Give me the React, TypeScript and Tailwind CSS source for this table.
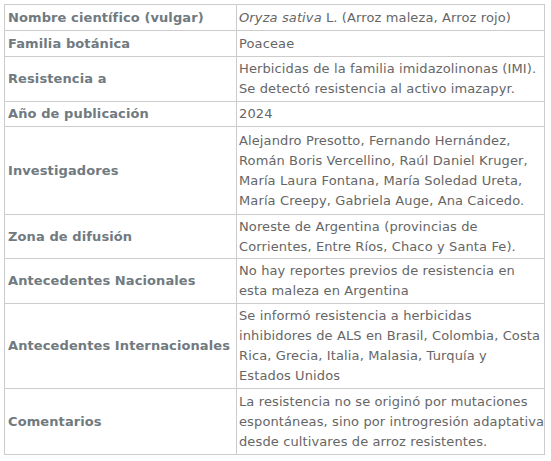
import React from "react";

const rows: { label: string; h: string; lines: React.ReactNode[] }[] = [
  {
    label: "Nombre científico (vulgar)",
    h: "h-[26px]",
    lines: [
      <>
        <i>Oryza sativa</i> L. (Arroz maleza, Arroz rojo)
      </>,
    ],
  },
  { label: "Familia botánica", h: "h-[26px]", lines: ["Poaceae"] },
  {
    label: "Resistencia a",
    h: "h-[45px]",
    lines: [
      "Herbicidas de la familia imidazolinonas (IMI).",
      "Se detectó resistencia al activo imazapyr.",
    ],
  },
  { label: "Año de publicación", h: "h-[25px]", lines: ["2024"] },
  {
    label: "Investigadores",
    h: "h-[88px]",
    lines: [
      "Alejandro Presotto, Fernando Hernández,",
      "Román Boris Vercellino, Raúl Daniel Kruger,",
      "María Laura Fontana, María Soledad Ureta,",
      "María Creepy, Gabriela Auge, Ana Caicedo.",
    ],
  },
  {
    label: "Zona de difusión",
    h: "h-[44px]",
    lines: [
      "Noreste de Argentina (provincias de",
      "Corrientes, Entre Ríos, Chaco y Santa Fe).",
    ],
  },
  {
    label: "Antecedentes Nacionales",
    h: "h-[45px]",
    lines: ["No hay reportes previos de resistencia en", "esta maleza en Argentina"],
  },
  {
    label: "Antecedentes Internacionales",
    h: "h-[85px]",
    lines: [
      "Se informó resistencia a herbicidas",
      "inhibidores de ALS en Brasil, Colombia, Costa",
      "Rica, Grecia, Italia, Malasia, Turquía y",
      "Estados Unidos",
    ],
  },
  {
    label: "Comentarios",
    h: "h-[66px]",
    lines: [
      "La resistencia no se originó por mutaciones",
      "espontáneas, sino por introgresión adaptativa",
      "desde cultivares de arroz resistentes.",
    ],
  },
];

export default function App() {
  return (
    <div className="w-[551px] h-[461px] bg-white p-[4px] font-['DejaVu_Sans',Verdana,sans-serif] text-[13px] leading-[20px]">
      <table className="border-collapse w-[540px] table-fixed">
        <colgroup>
          <col className="w-[232px]" />
          <col className="w-[308px]" />
        </colgroup>
        <tbody>
          {rows.map((r, i) => (
            <tr key={i}>
              <td
                className={`${r.h} border border-[#cccccc] pl-[3px] py-0 align-middle font-bold text-[#707a7f] whitespace-nowrap tracking-[0.1px]`}
              >
                {r.label}
              </td>
              <td className="border border-[#cccccc] pl-[2px] py-0 align-middle text-[#666666] whitespace-nowrap tracking-[0.12px]">
                {r.lines.map((l, j) => (
                  <div key={j}>{l}</div>
                ))}
              </td>
            </tr>
          ))}
        </tbody>
      </table>
    </div>
  );
}
